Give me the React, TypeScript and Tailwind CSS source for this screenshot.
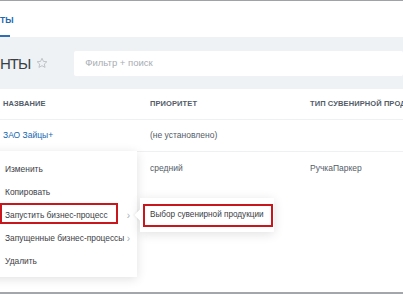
import React from "react";

// ─── Data ────────────────────────────────────────────────

const COLUMNS = ["Название", "Приоритет", "Тип сувенирной продукции"];

const ROWS: { name: string; priority: string; type: string; link?: boolean }[] = [
  { name: "ЗАО Зайцы+", priority: "(не установлено)", type: "", link: true },
  { name: "", priority: "средний", type: "РучкаПаркер" },
];

const MENU = [
  { label: "Изменить" },
  { label: "Копировать" },
  { label: "Запустить бизнес-процесс", sub: true },
  { label: "Запущенные бизнес-процессы", sub: true },
  { label: "Удалить" },
];

function Star() {
  return (
    <svg width="12" height="12" viewBox="0 0 24 24" fill="none" stroke="#b3b8be" strokeWidth="1.6" strokeLinejoin="round">
      <path d="M12 2.5l2.9 6.3 6.8.7-5.1 4.6 1.5 6.7L12 17.4l-6.1 3.4 1.5-6.7-5.1-4.6 6.8-.7z" />
    </svg>
  );
}

// ─── Component ───────────────────────────────────────────

export default function App() {
  return (
    <div
      className="relative w-[403px] h-[294px] overflow-hidden bg-white flex flex-col"
      style={{ fontFamily: '"Liberation Sans", Arial, sans-serif' }}
    >
      <div className="h-px bg-[#9fa3a8]" />

      {/* Tabs */}
      <div className="h-[36px] flex items-end">
        <div className="flex flex-col">
          <span className="text-[8.5px] font-bold text-[#2067b0] leading-none pb-[11px]">ТЫ</span>
          <div className="h-[2px] w-[10px] bg-[#2f6db5]" />
        </div>
      </div>

      {/* Title + filter */}
      <div className="h-[52px] bg-[#eef2f4] flex items-center">
        <span className="text-[15px] text-[#3a3f45] leading-none tracking-[-1px]">НТЫ</span>
        <span className="ml-[6px] flex items-center">
          <Star />
        </span>
        <div className="ml-[26px] flex-1 h-[25px] bg-white rounded-[2px] flex items-center pl-[11px]">
          <span className="text-[9.5px] text-[#a8adb4]">Фильтр + поиск</span>
        </div>
      </div>

      {/* Table */}
      <div className="grid grid-cols-[147px_160px_1fr] h-[31px] items-center border-b border-[#eef0f2]">
        {COLUMNS.map((c) => (
          <span
            key={c}
            className="pl-[3px] text-[7.5px] font-bold uppercase tracking-[0.1px] text-[#535c69] whitespace-nowrap"
          >
            {c}
          </span>
        ))}
      </div>
      {ROWS.map((r, i) => (
        <div
          key={i}
          className={`grid grid-cols-[147px_160px_1fr] h-[32px] items-center text-[8.5px] ${i === 0 ? "border-b border-[#eef0f2]" : ""}`}
        >
          <span className={`pl-[3px] ${r.link ? "text-[#2067b0]" : "text-[#333]"}`}>{r.name}</span>
          <span className="pl-[3px] text-[#535c69]">{r.priority}</span>
          <span className="pl-[3px] text-[#535c69]">{r.type}</span>
        </div>
      ))}

      <div className="flex-1" />
      <div className="h-[2px] bg-[#a3a6aa]" />

      {/* Context menu */}
      <div className="absolute left-[-10px] top-[151px] w-[147px] bg-white pt-[7px] pb-[4px] shadow-[0_2px_10px_rgba(0,0,0,0.12)]">
        {MENU.map((m) => (
          <div key={m.label} className="h-[23px] flex items-center pl-[15px] pr-[7px] text-[8.4px] text-[#3c4046]">
            <span className="whitespace-nowrap">{m.label}</span>
            {m.sub && <span className="ml-auto text-[10px] text-[#a8adb4] leading-none">›</span>}
          </div>
        ))}
      </div>

      {/* Submenu */}
      <div className="absolute left-[140px] top-[198px] w-[134px] h-[34px] bg-white shadow-[0_2px_10px_rgba(0,0,0,0.12)] flex items-center pl-[10px]">
        <div className="absolute left-[-4px] top-[13px] w-[8px] h-[8px] bg-white rotate-45 shadow-[-1px_1px_2px_rgba(0,0,0,0.06)]" />
        <span className="relative text-[8.2px] text-[#3c4046] whitespace-nowrap">Выбор сувенирной продукции</span>
      </div>

      {/* Highlight boxes */}
      <div className="absolute left-0 top-[203px] w-[118px] h-[21px] border-2 border-[#c8161d]" />
      <div className="absolute left-[143px] top-[204px] w-[130px] h-[23px] border-2 border-[#c8161d]" />
    </div>
  );
}
